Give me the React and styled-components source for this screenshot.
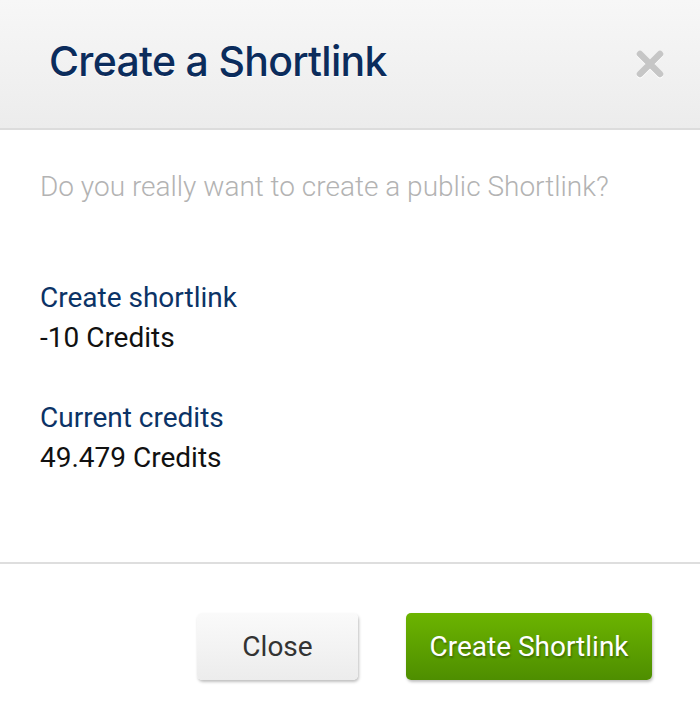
import React from "react";
import styled, { createGlobalStyle } from "styled-components";

const Global = createGlobalStyle`
  html, body {
    margin: 0;
    padding: 0;
    background: #fff;
  }
  body {
    font-family: Roboto, "Liberation Sans", sans-serif;
  }
`;

const Dialog = styled.div`
  width: 700px;
  height: 728px;
  display: flex;
  flex-direction: column;
  background: #fff;
`;

const Header = styled.div`
  height: 128px;
  display: flex;
  align-items: center;
  justify-content: space-between;
  padding: 0 34px 0 49px;
  background: linear-gradient(#f7f7f7, #ececec);
  border-bottom: 2px solid #dcdcdc;
  box-sizing: content-box;
`;

const Title = styled.h1`
  margin: 0 0 6px;
  font-family: Inter, "Liberation Sans", sans-serif;
  font-weight: 500;
  font-size: 41px;
  letter-spacing: -0.7px;
  color: #0b2c5c;
  text-shadow: 0 1px 0 #fff;
`;

const CloseIcon = styled.button`
  border: none;
  background: none;
  padding: 0;
  width: 32px;
  height: 32px;
  cursor: pointer;
  svg {
    display: block;
    filter: drop-shadow(0 1px 0 #fff);
  }
`;

const Body = styled.div`
  padding: 37px 40px 0;
  height: 395px;
  border-bottom: 2px solid #dedede;
  font-size: 28px;
  line-height: 40px;
`;

const Question = styled.p`
  margin: 0 0 71px;
  color: #b3b3b3;
  font-weight: 300;
`;

const Entry = styled.div`
  margin-bottom: 40px;
`;

const Label = styled.div`
  color: #0b3366;
`;

const Value = styled.div`
  color: #111;
`;

const Footer = styled.div`
  display: flex;
  justify-content: flex-end;
  gap: 48px;
  padding: 49px 48px 0;
`;

const Button = styled.button`
  height: 67px;
  width: ${({ $w }) => $w}px;
  border-radius: 5px;
  border: none;
  font-family: Roboto, "Liberation Sans", sans-serif;
  font-size: 28px;
  cursor: pointer;
  box-shadow: 1px 2px 3px rgba(0, 0, 0, 0.25);
  color: ${({ $primary }) => ($primary ? "#fff" : "#333")};
  background: ${({ $primary }) =>
    $primary
      ? "linear-gradient(#6cb400, #4e8e00)"
      : "linear-gradient(#fafafa, #ececec)"};
  text-shadow: ${({ $primary }) =>
    $primary ? "1px 2px 2px rgba(0,0,0,0.3)" : "none"};
`;

export default function App() {
  return (
    <Dialog>
      <Global />
      <Header>
        <Title>Create a Shortlink</Title>
        <CloseIcon aria-label="Close">
          <svg width="32" height="32" viewBox="0 0 32 32">
            <path
              d="M6 6 L26 26 M26 6 L6 26"
              stroke="#c6c6c6"
              strokeWidth="6.5"
              strokeLinecap="round"
            />
          </svg>
        </CloseIcon>
      </Header>
      <Body>
        <Question>Do you really want to create a public Shortlink?</Question>
        <Entry>
          <Label>Create shortlink</Label>
          <Value>-10 Credits</Value>
        </Entry>
        <Entry>
          <Label>Current credits</Label>
          <Value>49.479 Credits</Value>
        </Entry>
      </Body>
      <Footer>
        <Button $w={161}>Close</Button>
        <Button $w={246} $primary>
          Create Shortlink
        </Button>
      </Footer>
    </Dialog>
  );
}
